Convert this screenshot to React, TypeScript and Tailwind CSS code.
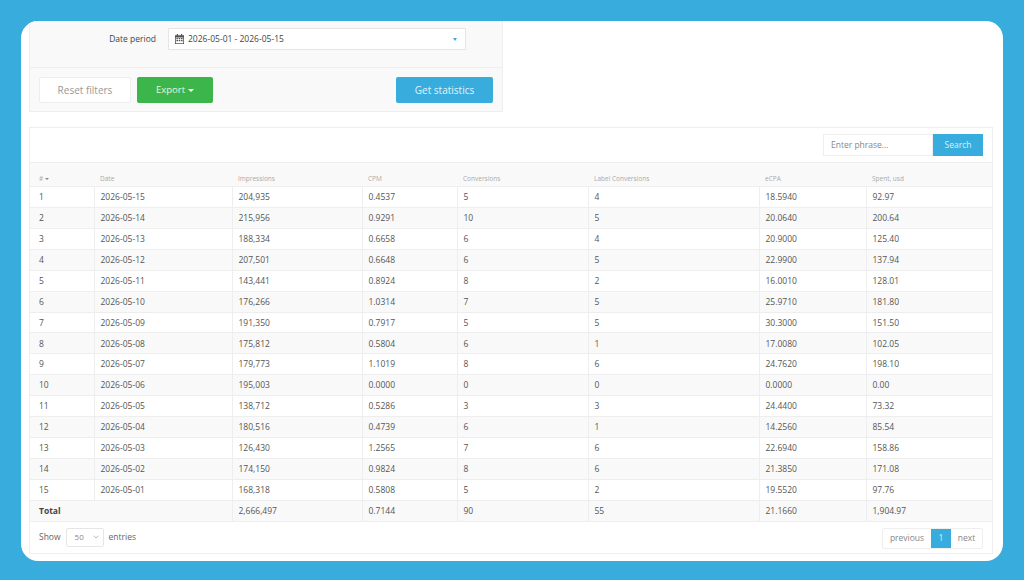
import React from 'react';
import { ChevronDown } from 'lucide-react';

const rows = [
  ['1', '2026-05-15', '204,935', '0.4537', '5', '4', '18.5940', '92.97'],
  ['2', '2026-05-14', '215,956', '0.9291', '10', '5', '20.0640', '200.64'],
  ['3', '2026-05-13', '188,334', '0.6658', '6', '4', '20.9000', '125.40'],
  ['4', '2026-05-12', '207,501', '0.6648', '6', '5', '22.9900', '137.94'],
  ['5', '2026-05-11', '143,441', '0.8924', '8', '2', '16.0010', '128.01'],
  ['6', '2026-05-10', '176,266', '1.0314', '7', '5', '25.9710', '181.80'],
  ['7', '2026-05-09', '191,350', '0.7917', '5', '5', '30.3000', '151.50'],
  ['8', '2026-05-08', '175,812', '0.5804', '6', '1', '17.0080', '102.05'],
  ['9', '2026-05-07', '179,773', '1.1019', '8', '6', '24.7620', '198.10'],
  ['10', '2026-05-06', '195,003', '0.0000', '0', '0', '0.0000', '0.00'],
  ['11', '2026-05-05', '138,712', '0.5286', '3', '3', '24.4400', '73.32'],
  ['12', '2026-05-04', '180,516', '0.4739', '6', '1', '14.2560', '85.54'],
  ['13', '2026-05-03', '126,430', '1.2565', '7', '6', '22.6940', '158.86'],
  ['14', '2026-05-02', '174,150', '0.9824', '8', '6', '21.3850', '171.08'],
  ['15', '2026-05-01', '168,318', '0.5808', '5', '2', '19.5520', '97.76'],
];

const headers = ['Date', 'Impressions', 'CPM', 'Conversions', 'Label Conversions', 'eCPA', 'Spent, usd'];
const widths = [64, 138, 130, 95, 131, 171, 107, 126];

const CalendarIcon = () => (
  <svg width="9" height="10" viewBox="0 0 9 10" fill="#555">
    <rect x="1.8" y="0" width="1.2" height="2" />
    <rect x="6" y="0" width="1.2" height="2" />
    <path d="M0 1.2h9V10H0z M0.8 3.4v5.8h7.4V3.4z" fillRule="evenodd" />
    <path d="M1.4 4h1.6v1.3H1.4z M3.7 4h1.6v1.3H3.7z M6 4h1.6v1.3H6z M1.4 6h1.6v1.3H1.4z M3.7 6h1.6v1.3H3.7z M6 6h1.6v1.3H6z" />
  </svg>
);

export default function App() {
  return (
    <div className="w-[1024px] h-[580px] overflow-hidden bg-[#38acdc] pt-[21px] pl-[21px] font-['Open_Sans',sans-serif]">
      <div className="w-[982px] h-[540px] overflow-hidden rounded-[17px] bg-white pl-[8px] pr-[10px]">
        {/* Filters */}
        <div className="w-[474px] h-[91px] border-x border-b border-[#eeeeee] bg-[#f9f9f9]">
          <div className="h-[47px] flex items-start border-b border-[#eeeeee] pt-[7px]">
            <span className="w-[126px] text-right text-[8.5px] leading-[21px] text-[#444]">Date period</span>
            <div className="ml-[12px] w-[298px] h-[22px] flex items-center border border-[#e6e6e6] bg-white pl-[6px] pr-[8px] text-[8.5px] text-[#444]">
              <CalendarIcon />
              <span className="ml-[4px] flex-1">2026-05-01 - 2026-05-15</span>
              <span className="w-0 h-0 border-x-[2.5px] border-t-[3px] border-x-transparent border-t-[#38acdc]" />
            </div>
          </div>
          <div className="flex items-center pl-[9px] pr-[9px] pt-[9px]">
            <button className="w-[92px] h-[26px] rounded-[2px] border border-[#eeeeee] bg-white text-[10px] text-[#999]">Reset filters</button>
            <button className="ml-[6px] w-[76px] h-[26px] rounded-[2px] bg-[#3cb54b] text-[9.5px] font-medium text-[#e4f5e6] flex items-center justify-center gap-[3px]">
              Export
              <span className="w-0 h-0 border-x-[3px] border-t-[3px] border-x-transparent border-t-white" />
            </button>
            <button className="ml-auto w-[97px] h-[26px] rounded-[2px] bg-[#38acdc] text-[10px] font-medium text-[#e0f3fb]">Get statistics</button>
          </div>
        </div>

        {/* Statistics table */}
        <div className="mt-[15px] w-[964px] h-[427px] border border-[#eeeeee] bg-white">
          <div className="h-[34px] flex items-start justify-end pt-[6px] pr-[9px]">
            <div className="w-[110px] h-[22px] flex items-center border border-[#eeeeee] pl-[7px] text-[8.5px] text-[#888]">Enter phrase...</div>
            <button className="w-[50px] h-[22px] bg-[#38acdc] text-[8.5px] text-[#d8f0fa]">Search</button>
          </div>
          <table className="w-[962px] table-fixed border-collapse">
            <colgroup>
              {widths.map((w, i) => (
                <col key={i} style={{ width: w }} />
              ))}
            </colgroup>
            <thead>
              <tr className="h-[24px] bg-[#f9f9f9] border-y border-[#eeeeee]">
                <th className="pl-[9px] pt-[8px] text-left text-[6.5px] font-normal text-[#aaa]">
                  # <span className="inline-block align-middle w-0 h-0 border-x-[2px] border-t-[2.5px] border-x-transparent border-t-[#888]" />
                </th>
                {headers.map((h) => (
                  <th key={h} className="pl-[6px] pt-[8px] text-left text-[6.5px] font-normal text-[#aaa]">{h}</th>
                ))}
              </tr>
            </thead>
            <tbody>
              {rows.map((r, i) => (
                <tr key={r[0]} className={`h-[20.93px] border-b border-[#eeeeee] ${i % 2 === 1 ? 'bg-[#f9f9f9]' : 'bg-white'}`}>
                  {r.map((c, j) => (
                    <td key={j} className={`pt-[1px] text-[8.5px] text-[#555] border-[#eeeeee] ${j === 0 ? 'pl-[9px]' : 'pl-[6px] border-l'}`}>{c}</td>
                  ))}
                </tr>
              ))}
              <tr className="h-[21px] border-b border-[#eeeeee] bg-[#f9f9f9] text-[8.5px] text-[#555]">
                <td colSpan={2} className="pl-[9px] pt-[1px] font-bold text-[#444]">Total</td>
                <td className="pl-[6px] pt-[1px] border-l border-[#eeeeee]">2,666,497</td>
                <td className="pl-[6px] pt-[1px] border-l border-[#eeeeee]">0.7144</td>
                <td className="pl-[6px] pt-[1px] border-l border-[#eeeeee]">90</td>
                <td className="pl-[6px] pt-[1px] border-l border-[#eeeeee]">55</td>
                <td className="pl-[6px] pt-[1px] border-l border-[#eeeeee]">21.1660</td>
                <td className="pl-[6px] pt-[1px] border-l border-[#eeeeee]">1,904.97</td>
              </tr>
            </tbody>
          </table>
          <div className="flex items-start justify-between pl-[9px] pr-[9px] pt-[6px]">
            <div className="flex items-center text-[8.5px] text-[#666]">
              Show
              <div className="ml-[5px] w-[38px] h-[19px] flex items-center justify-between border border-[#e6e6e6] rounded-[2px] pl-[8px] pr-[3px] text-[8px] text-[#888]">
                50
                <ChevronDown size={8} strokeWidth={1.5} color="#777" />
              </div>
              <span className="ml-[5px]">entries</span>
            </div>
            <div className="flex h-[21px] items-stretch border border-[#eeeeee] rounded-[2px] text-[8.5px] text-[#888]">
              <span className="w-[48px] flex items-center justify-center">previous</span>
              <span className="w-[20px] flex items-center justify-center bg-[#38acdc] text-[#d8f0fa]">1</span>
              <span className="w-[31px] flex items-center justify-center">next</span>
            </div>
          </div>
        </div>
      </div>
    </div>
  );
}
